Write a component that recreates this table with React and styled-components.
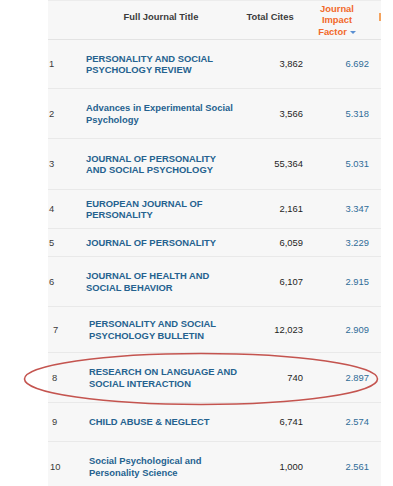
import React from 'react';
import styled, { createGlobalStyle } from 'styled-components';

const GlobalStyle = createGlobalStyle`
  html, body {
    margin: 0;
    padding: 0;
    background: #ffffff;
  }
  body {
    font-family: "Liberation Sans", Arial, Helvetica, sans-serif;
  }
`;

const journals = [
  { rank: 1, title: ['PERSONALITY AND SOCIAL', 'PSYCHOLOGY REVIEW'], cites: '3,862', impact: '6.692', height: 49 },
  { rank: 2, title: ['Advances in Experimental Social', 'Psychology'], cites: '3,566', impact: '5.318', height: 50 },
  { rank: 3, title: ['JOURNAL OF PERSONALITY', 'AND SOCIAL PSYCHOLOGY'], cites: '55,364', impact: '5.031', height: 51 },
  { rank: 4, title: ['EUROPEAN JOURNAL OF', 'PERSONALITY'], cites: '2,161', impact: '3.347', height: 39 },
  { rank: 5, title: ['JOURNAL OF PERSONALITY'], cites: '6,059', impact: '3.229', height: 28 },
  { rank: 6, title: ['JOURNAL OF HEALTH AND', 'SOCIAL BEHAVIOR'], cites: '6,107', impact: '2.915', height: 50 },
  { rank: 7, title: ['PERSONALITY AND SOCIAL', 'PSYCHOLOGY BULLETIN'], cites: '12,023', impact: '2.909', height: 46, numPad: 5, shift: 3 },
  { rank: 8, title: ['RESEARCH ON LANGUAGE AND', 'SOCIAL INTERACTION'], cites: '740', impact: '2.897', height: 50, numPad: 4, shift: 3, circled: true },
  { rank: 9, title: ['CHILD ABUSE & NEGLECT'], cites: '6,741', impact: '2.574', height: 39, numPad: 4, shift: 3 },
  { rank: 10, title: ['Social Psychological and', 'Personality Science'], cites: '1,000', impact: '2.561', height: 50, numPad: 2, shift: 3 },
];

const Page = styled.div`
  padding-left: 48px;
`;

const Table = styled.div`
  width: 333px;
  background: #f7f7f7;
  border-top: 1px solid #ececec;
  font-size: 9.4px;
  line-height: 11.3px;
`;

const HeaderRow = styled.div`
  display: grid;
  grid-template-columns: 38px 150px 74px 69px 2px;
  height: 38px;
  border-bottom: 1px solid #e3e3e3;
  font-weight: bold;
`;

const HeaderCell = styled.div`
  color: #3c3c3c;
  text-align: center;
  padding-top: ${p => p.$top || 0}px;
  padding-right: ${p => p.$padRight || 0}px;
`;

const ImpactHead = styled(HeaderCell)`
  color: #f2692a;
`;

const SortArrow = styled.span`
  display: inline-block;
  width: 0;
  height: 0;
  margin-left: 3px;
  vertical-align: 1px;
  border-left: 3px solid transparent;
  border-right: 3px solid transparent;
  border-top: 3px solid #5a8fd2;
`;

const CutHeader = styled.div`
  align-self: start;
  margin-top: 12px;
  height: 8px;
  background: #f4a35e;
`;

const Row = styled.div`
  position: relative;
  display: grid;
  grid-template-columns: 38px 150px 74px 71px;
  align-items: center;
  box-sizing: border-box;
  height: ${p => p.$height}px;
  border-bottom: 1px solid #e9e9e9;
`;

const Rank = styled.div`
  color: #3a3a3a;
  padding-left: ${p => p.$pad}px;
`;

const Title = styled.div`
  color: #25628f;
  font-weight: bold;
  white-space: nowrap;
  padding-left: ${p => p.$shift}px;
`;

const Cites = styled.div`
  color: #1e1e1e;
  text-align: right;
  padding-right: 7px;
`;

const Impact = styled.div`
  color: #2f6c98;
  text-align: right;
  padding-right: 12px;
`;

const Ring = styled.svg`
  position: absolute;
  left: -25px;
  top: 0px;
  width: 358px;
  height: 54px;
  pointer-events: none;
  overflow: visible;
`;

const Highlight = () => (
  <Ring viewBox="0 0 358 54">
    <ellipse cx="178" cy="26" rx="176.5" ry="25.5" fill="none" stroke="#c4544f" strokeWidth="1.6" />
  </Ring>
);

const App = () => {
  return (
    <Page>
      <GlobalStyle />
      <Table>
        <HeaderRow>
          <div />
          <HeaderCell $top={10}>Full Journal Title</HeaderCell>
          <HeaderCell $top={10} $padRight={6}>Total Cites</HeaderCell>
          <ImpactHead $top={2} $padRight={15}>
            Journal<br />Impact<br />Factor<SortArrow />
          </ImpactHead>
          <CutHeader />
        </HeaderRow>
        {journals.map(j => (
          <Row key={j.rank} $height={j.height}>
            <Rank $pad={j.numPad || 1}>{j.rank}</Rank>
            <Title $shift={j.shift || 0}>
              {j.title.map((line, i) => (
                <div key={i}>{line}</div>
              ))}
            </Title>
            <Cites>{j.cites}</Cites>
            <Impact>{j.impact}</Impact>
            {j.circled && <Highlight />}
          </Row>
        ))}
      </Table>
    </Page>
  );
};

export default App;
